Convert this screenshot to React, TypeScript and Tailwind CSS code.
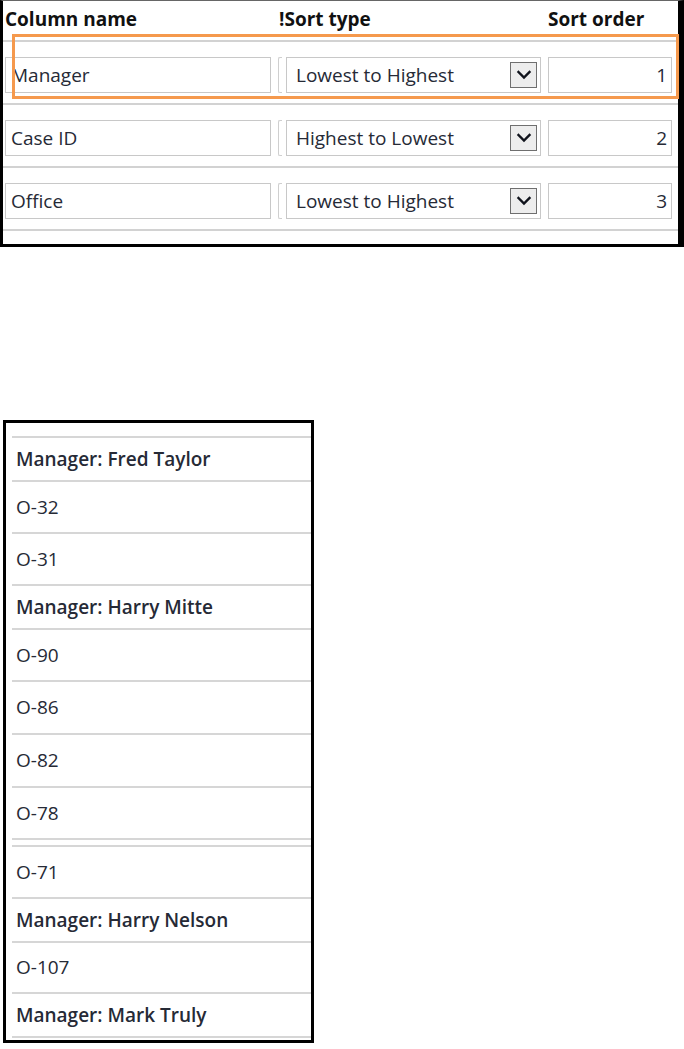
import React from 'react';

interface SortRow {
  column: string;
  sortType: string;
  order: number;
}

const sortRows: SortRow[] = [
  { column: 'Manager', sortType: 'Lowest to Highest', order: 1 },
  { column: 'Case ID', sortType: 'Highest to Lowest', order: 2 },
  { column: 'Office', sortType: 'Lowest to Highest', order: 3 },
];

type ListRow =
  | { kind: 'group'; label: string; h: string }
  | { kind: 'item'; label: string; h: string }
  | { kind: 'spacer'; h: string };

const listRows: ListRow[] = [
  { kind: 'group', label: 'Manager: Fred Taylor', h: 'h-[44px]' },
  { kind: 'item', label: 'O-32', h: 'h-[52px]' },
  { kind: 'item', label: 'O-31', h: 'h-[52px]' },
  { kind: 'group', label: 'Manager: Harry Mitte', h: 'h-[44px]' },
  { kind: 'item', label: 'O-90', h: 'h-[52px]' },
  { kind: 'item', label: 'O-86', h: 'h-[53px]' },
  { kind: 'item', label: 'O-82', h: 'h-[53px]' },
  { kind: 'item', label: 'O-78', h: 'h-[52px]' },
  { kind: 'spacer', h: 'h-[7px]' },
  { kind: 'item', label: 'O-71', h: 'h-[52px]' },
  { kind: 'group', label: 'Manager: Harry Nelson', h: 'h-[44px]' },
  { kind: 'item', label: 'O-107', h: 'h-[51px]' },
  { kind: 'group', label: 'Manager: Mark Truly', h: 'h-[44px]' },
];

const font = "font-['Open_Sans',_'Noto_Sans',_sans-serif]";

const Chevron: React.FC = () => (
  <svg width="16" height="10" viewBox="0 0 16 10" fill="none">
    <path d="M2.5 2 L8 7.5 L13.5 2" stroke="#10131c" strokeWidth="2.4" strokeLinecap="square" />
  </svg>
);

const App: React.FC = () => {
  return (
    <div className={`w-[684px] h-[1049px] bg-white ${font}`}>
      {/* sort settings grid */}
      <div className="relative w-[684px] border-t border-l-[3px] border-r-[6px] border-b-[3px] border-t-[#666] border-l-black border-r-black border-b-black pb-[13px]">
        <div className="flex h-[41px] items-center border-b-2 border-[#d2d2d2] text-[19px] font-bold text-[#111] leading-none pb-[2px]">
          <div className="w-[276px] pl-[2px]">Column name</div>
          <div className="w-[268px]">!Sort type</div>
          <div className="pl-[1px]">Sort order</div>
        </div>

        {sortRows.map((row) => (
          <div key={row.order} className="flex h-[63px] items-start pt-[15px] border-b-2 border-[#d2d2d2]">
            <div className="ml-[2px] w-[266px] h-[36px] border border-[#c8c8c8] flex items-center pl-[5px] text-[19px] text-[#262a36]">
              {row.column}
            </div>
            <div className="ml-[7px] w-[4px] h-[36px] border-l border-y border-[#cfcfcf] rounded-l-[2px]" />
            <div className="ml-[4px] w-[255px] h-[36px] border border-[#c8c8c8] flex items-center justify-between pl-[9px] pr-[3px] text-[19px] text-[#262a36]">
              <span>{row.sortType}</span>
              <span className="w-[27px] h-[26px] border border-[#6f6f6f] bg-[#ededed] flex items-center justify-center">
                <Chevron />
              </span>
            </div>
            <div className="ml-[7px] w-[124px] h-[36px] border border-[#c8c8c8] flex items-center justify-end pr-[4px] text-[19px] text-[#262a36]">
              {row.order}
            </div>
          </div>
        ))}

        {/* highlight */}
        <div className="absolute left-[9px] top-[33px] w-[667px] h-[65px] border-[3px] border-[#f5994d]" />
      </div>

      {/* grouped result list */}
      <div className="mt-[173px] ml-[3px] w-[311px] border-[3px] border-black pt-[13px] pb-[2px]">
        <div className="ml-[6px] border-t-2 border-[#d6d6d6]">
          {listRows.map((row, i) =>
            row.kind === 'spacer' ? (
              <div key={i} className={`${row.h} border-b-2 border-[#d6d6d6]`} />
            ) : (
              <div
                key={i}
                className={`${row.h} border-b-2 border-[#d6d6d6] flex items-center pl-[4px] text-[19px] text-[#262a36] ${
                  row.kind === 'group' ? 'font-semibold text-[#1c2030]' : ''
                }`}
              >
                {row.label}
              </div>
            )
          )}
        </div>
      </div>
    </div>
  );
};

export default App;
